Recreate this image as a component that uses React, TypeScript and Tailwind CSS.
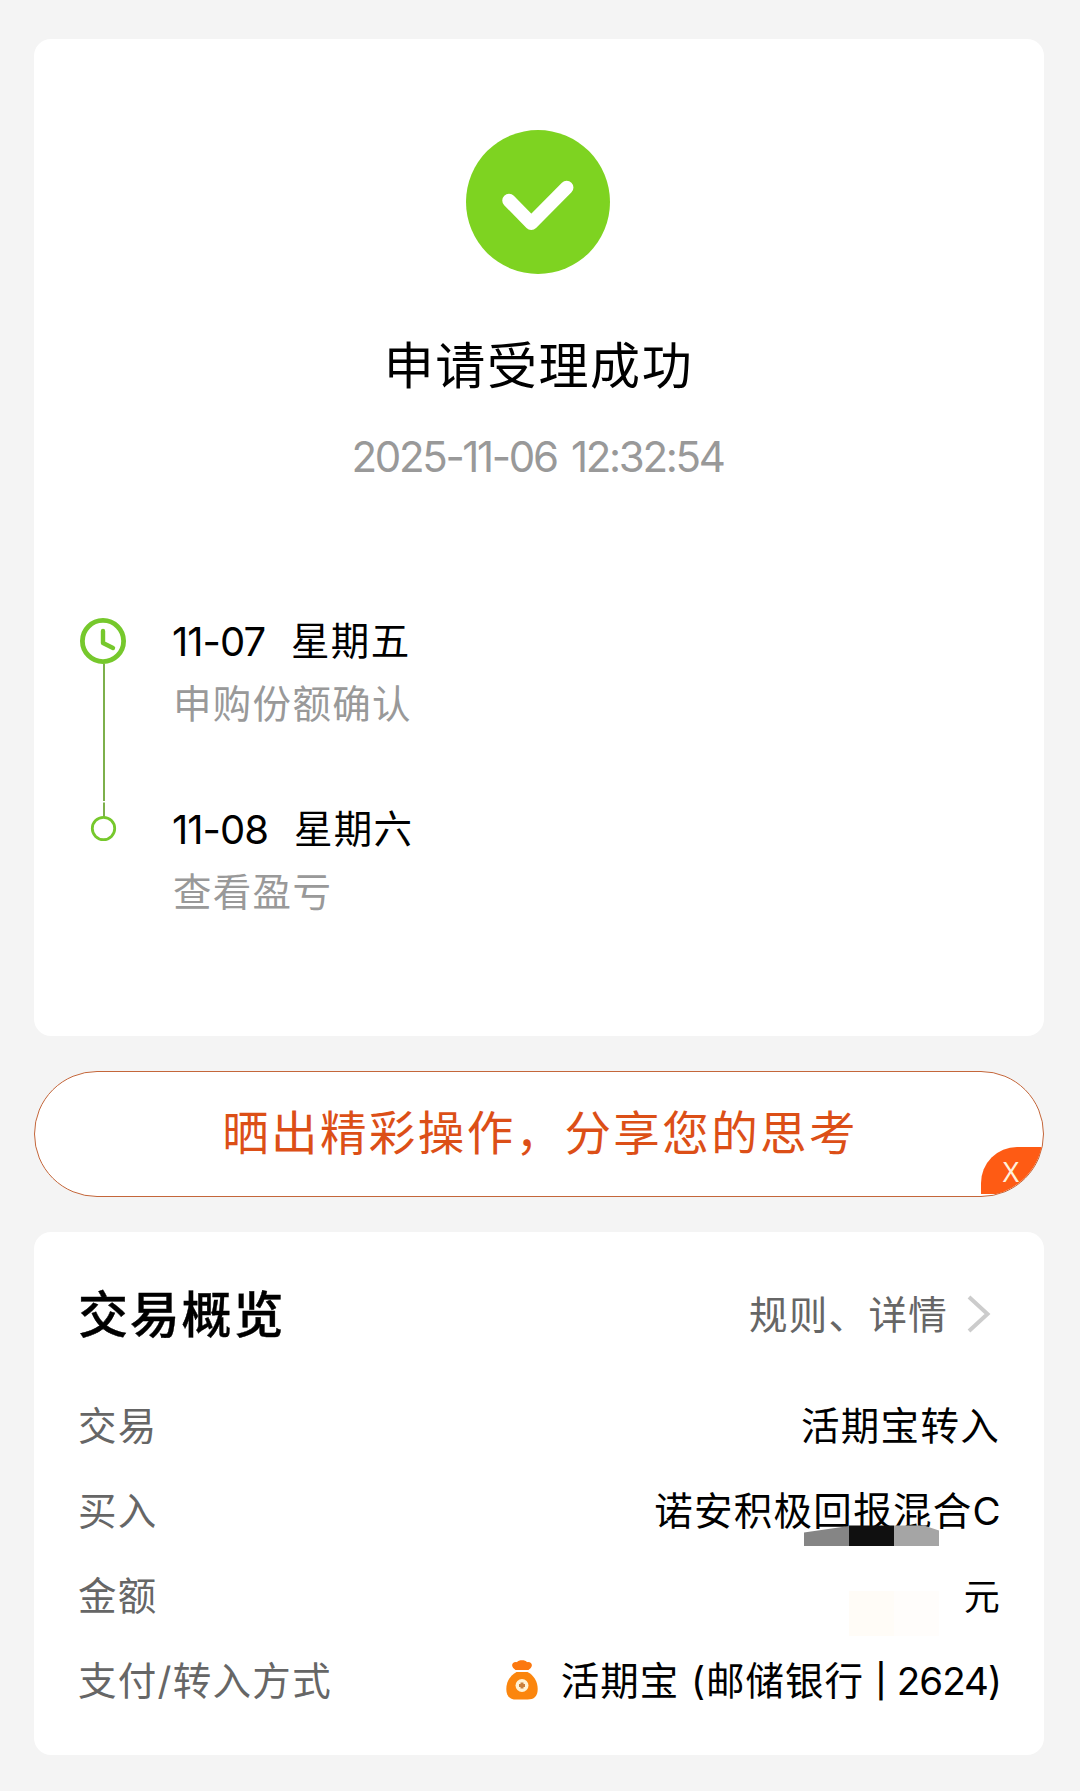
import { FC, ReactNode } from 'react';

interface TimelineItemProps {
    date: string;
    weekday: string;
    text: string;
}

interface DetailRowProps {
    label: string;
    children: ReactNode;
}

const SuccessIcon: FC = () => (
    <svg viewBox="0 0 144 144" className="w-36 h-36 mr-0.5">
        <circle cx="72" cy="72" r="72" fill="#7ed321" />
        <path
            d="M43 70.5 65.3 93.2 100.7 57.5"
            fill="none"
            stroke="#fff"
            strokeWidth="13.5"
            strokeLinecap="round"
            strokeLinejoin="round"
        />
    </svg>
);

const TimelineTrack: FC = () => (
    <svg viewBox="0 0 48 230" className="w-12 h-[230px] shrink-0">
        <g fill="none" stroke="#76c82c">
            <path d="M25 46.5V184M25 185.5V200" stroke="#7db04b" strokeWidth="2" />
            <circle cx="24" cy="24" r="20.6" strokeWidth="4.8" />
            <path
                d="M24 14V26L34 31"
                strokeWidth="4.4"
                strokeLinecap="round"
                strokeLinejoin="round"
            />
            <circle cx="24.5" cy="211.5" r="11.2" strokeWidth="2.8" />
        </g>
    </svg>
);

const MoneyBag: FC = () => (
    <svg viewBox="0 0 32 40" className="w-8 h-10 mr-[23px] -mt-[3px]">
        <path
            d="M9.500 10 7.200 8C4.800 5 6.500 1.500 11 2.200 12.500-.3 19.500-.3 21 2.200c4.500-.7 6.200 2.800 3.800 5.800L22.500 10Z"
            fill="#fc780f"
        />
        <path
            d="M10.500 12h11c6 3 10.200 9.500 10.200 17 0 7.500-3.700 10.500-10.200 10.500h-11C4 39.500.300 36.500.300 29 .300 21.500 4.500 15 10.500 12Z"
            fill="#fb860e"
        />
        <circle cx="16" cy="25.500" r="6.500" fill="#fff3d6" />
        <path d="M14.500 22.500h3v1.500h1.500v3h-1.500v1.500h-3V27H13v-3h1.500Z" fill="#c9803c" />
    </svg>
);

const TimelineItem: FC<TimelineItemProps> = ({ date, weekday, text }) => (
    <div className="h-[188px]">
        <div className="flex items-center h-[62px] text-black">
            <span className="mr-[26px] pt-0.5 text-[40px] tracking-[-1px]">{date}</span>
            <span>{weekday}</span>
        </div>
        <div className="flex items-center h-[62px] pt-[3px] pl-px text-[#999]">{text}</div>
    </div>
);

const DetailRow: FC<DetailRowProps> = ({ label, children }) => (
    <div className="relative flex items-center justify-between h-[85px]">
        <span className="pt-0.5 text-[#666]">{label}</span>
        <div className="flex items-center pt-0.5 text-black">{children}</div>
    </div>
);

const App: FC = () => {
    return (
        <div className="w-[1080px] h-[1791px] pt-[39px] pl-[34px] pr-9 bg-[#f4f4f4] font-['Inter','Noto_Sans_CJK_SC',sans-serif] text-[38.500px] tracking-[1.300px] leading-none whitespace-nowrap">
            <section className="h-[997px] pt-[91px] bg-white rounded-[17px]">
                <div className="flex flex-col items-center">
                    <SuccessIcon />
                    <h1 className="flex items-center h-[70px] mt-[57px] pr-px text-[50px] tracking-[1.600px] text-black">
                        申请受理成功
                    </h1>
                    <p className="h-[60px] mt-[26px] pr-[3px] leading-[60px] text-[42px] tracking-[-2.350px] [word-spacing:5px] text-[#999]">
                        2025-11-06 12:32:54
                    </p>
                </div>
                <div className="flex mt-[130px] pl-[45px]">
                    <TimelineTrack />
                    <div className="-mt-[7px] ml-[45px]">
                        <TimelineItem date="11-07" weekday="星期五" text="申购份额确认" />
                        <TimelineItem date="11-08" weekday="星期六" text="查看盈亏" />
                    </div>
                </div>
            </section>

            <button
                type="button"
                className="relative flex items-center justify-center w-full h-[126px] mt-[35px] pb-0.5 pl-0.5 bg-white border border-[#c4663a] rounded-full overflow-hidden text-[46.500px] tracking-[2.400px] text-[#dc4f17]"
            >
                晒出精彩操作，分享您的思考
                <span className="absolute right-0 bottom-[2px] flex items-center justify-center w-[62px] h-[47px] pr-0.5 rounded-tl-[36px] bg-[#fe5b14] font-['Noto_Sans'] text-[28px] tracking-normal text-[#fff0dc]">
                    X
                </span>
            </button>

            <section className="h-[523px] mt-[35px] px-11 bg-white rounded-[17px]">
                <div className="flex items-center justify-between h-[151px] pt-3">
                    <h2 className="pt-[3px] text-[50px] tracking-[1.800px] font-medium text-black [-webkit-text-stroke:0.4px_black]">
                        交易概览
                    </h2>
                    <div className="flex items-center pr-[9px] text-[#666]">
                        <span className="pt-1">规则、详情</span>
                        <svg viewBox="0 0 24 38" className="w-6 h-[38px] ml-[19px]">
                            <path
                                d="M2 2 20.500 19 2 36"
                                fill="none"
                                stroke="#ccc"
                                strokeWidth="4"
                            />
                        </svg>
                    </div>
                </div>
                <DetailRow label="交易">
                    活期宝转入
                </DetailRow>
                <DetailRow label="买入">
                    <span className="-mr-0.5">诺安积极回报混合C</span>
                    <svg
                        viewBox="0 0 135 21"
                        className="absolute right-[61px] top-[57px] w-[135px] h-[21px]"
                    >
                        <path d="M0 7.500 45 1V21H0Z" fill="#858585" />
                        <path d="M45 .500H90V21H45Z" fill="#101010" />
                        <path d="M90 .500H120L135 5.500V21H90Z" fill="#a5a5a5" />
                    </svg>
                </DetailRow>
                <DetailRow label="金额">
                    <span className="-mr-px text-[36px]">元</span>
                    <div className="absolute right-[61px] top-[38px] flex w-[90px] h-[45px]">
                        <div className="w-1/2 bg-[#fffcf7]" />
                        <div className="w-1/2 bg-[#fffdfb]" />
                    </div>
                </DetailRow>
                <DetailRow label="支付/转入方式">
                    <MoneyBag />
                    <span className="tracking-[1px]">活期宝 (邮储银行</span>
                    <span className="ml-[11px] mr-[9px] text-[33px] font-medium">|</span>
                    <span className="-mr-px tracking-[-1px]">2624)</span>
                </DetailRow>
            </section>
        </div>
    );
};

export default App;
